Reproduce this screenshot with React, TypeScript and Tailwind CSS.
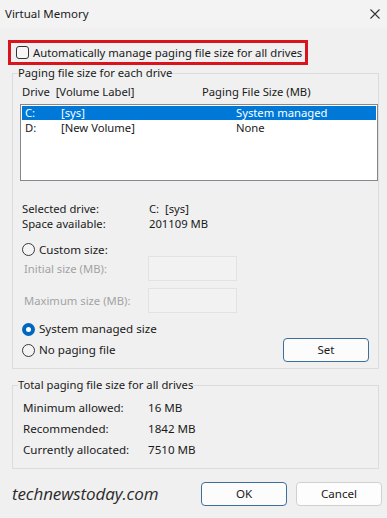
import React from "react";

function Radio({ checked }: { checked?: boolean }) {
  return checked ? (
    <span className="w-[13px] h-[13px] rounded-full bg-[#0067c0] flex items-center justify-center shrink-0">
      <span className="w-[5px] h-[5px] rounded-full bg-white" />
    </span>
  ) : (
    <span className="w-[13px] h-[13px] rounded-full border border-[#3a3a3a] bg-[#f4f4f4] shrink-0" />
  );
}

export default function App() {
  return (
    <div className="w-[387px] h-[518px] overflow-hidden bg-[#f0f0f0] text-[11.25px] leading-[16px] text-[#1a1a1a] font-['Noto_Sans',sans-serif] flex flex-col">
      {/* Title bar */}
      <div className="h-[28px] bg-[#f3f3f3] flex items-center justify-between pl-[5px] pr-[6px] shrink-0">
        <span className="text-[11.5px]">Virtual Memory</span>
        <svg width="10" height="10" viewBox="0 0 10 10" className="mr-[1px]">
          <path d="M0.5 0.5 L9.5 9.5 M9.5 0.5 L0.5 9.5" stroke="#333" strokeWidth="1.1" />
        </svg>
      </div>

      {/* Auto manage checkbox */}
      <div className="mt-[12px] ml-[8px] w-[300px] h-[25px] border-[3px] border-[#d9141c] flex items-center pl-[5px] shrink-0">
        <span className="w-[13px] h-[13px] rounded-[3px] border border-[#333] bg-[#f6f6f6] shrink-0" />
        <span className="ml-[4px] whitespace-nowrap text-[11.3px]">Automatically manage paging file size for all drives</span>
      </div>

      {/* Group 1 */}
      <fieldset className="ml-[12px] w-[367px] border border-[#dcdcdc] pb-[6px] shrink-0">
        <legend className="ml-[5px] leading-[16px]">Paging file size for each drive</legend>
        <div className="mt-[3px] h-[16px] flex pl-[9px]">
          <span className="w-[180px] whitespace-nowrap">Drive&nbsp; [Volume Label]</span>
          <span className="whitespace-nowrap">Paging File Size (MB)</span>
        </div>
        <div className="mt-[4px] ml-[7px] w-[358px] h-[77px] border border-[#828790] bg-white p-[1px]">
          <div className="h-[14px] bg-[#0078d7] text-white flex items-center pl-[3px] leading-[14px]">
            <span className="w-[36px]">C:</span>
            <span className="w-[175px]">[sys]</span>
            <span>System managed</span>
          </div>
          <div className="h-[15px] flex items-center pl-[3px] leading-[15px]">
            <span className="w-[36px]">D:</span>
            <span className="w-[175px]">[New Volume]</span>
            <span>None</span>
          </div>
        </div>

        <div className="mt-[20px] pl-[9px]">
          <div className="h-[15px] flex leading-[15px]">
            <span className="w-[127px]">Selected drive:</span>
            <span>C:&nbsp; [sys]</span>
          </div>
          <div className="h-[15px] flex leading-[15px]">
            <span className="w-[127px]">Space available:</span>
            <span>201109 MB</span>
          </div>
        </div>

        <div className="mt-[12px] pl-[9px] h-[13px] flex items-center">
          <Radio />
          <span className="ml-[4px] text-[11.6px] leading-[13px]">Custom size:</span>
        </div>

        <div className="pl-[11px] flex items-center h-[25px] text-[#a3a3a3]">
          <span className="w-[124px]">Initial size (MB):</span>
          <span className="w-[89px] h-[25px] border border-[#e2e2e2] bg-[#f2f2f2]" />
        </div>
        <div className="mt-[7px] pl-[11px] flex items-center h-[25px] text-[#a3a3a3]">
          <span className="w-[124px]">Maximum size (MB):</span>
          <span className="w-[89px] h-[25px] border border-[#e2e2e2] bg-[#f2f2f2]" />
        </div>

        <div className="mt-[8px] pl-[9px] h-[16px] flex items-center">
          <Radio checked />
          <span className="ml-[4px] text-[11.6px]">System managed size</span>
        </div>
        <div className="mt-[1px] pl-[9px] pr-[9px] h-[24px] flex items-center justify-between">
          <div className="flex items-center">
            <Radio />
            <span className="ml-[4px] text-[11.6px]">No paging file</span>
          </div>
          <button className="w-[86px] h-[24px] rounded-[4px] border border-[#3d6e9c] bg-[#fcfcfc] text-[11.5px]">
            Set
          </button>
        </div>
      </fieldset>

      {/* Group 2 */}
      <fieldset className="mt-[8px] ml-[12px] w-[367px] border border-[#dcdcdc] pb-[8px] shrink-0">
        <legend className="ml-[5px] leading-[16px]">Total paging file size for all drives</legend>
        <div className="mt-[4px] pl-[10px] text-[11.6px]">
          <div className="h-[21px] flex items-center">
            <span className="w-[125px]">Minimum allowed:</span>
            <span>16 MB</span>
          </div>
          <div className="h-[21px] flex items-center">
            <span className="w-[125px]">Recommended:</span>
            <span>1842 MB</span>
          </div>
          <div className="h-[21px] flex items-center">
            <span className="w-[125px]">Currently allocated:</span>
            <span>7510 MB</span>
          </div>
        </div>
      </fieldset>

      {/* Bottom bar */}
      <div className="mt-[13px] h-[24px] flex items-center shrink-0">
        <span className="ml-[12px] w-[189px] text-[17px] italic text-[#2b2b2b] font-['Open_Sans',sans-serif] leading-[24px] tracking-[-0.1px]">
          technewstoday.com
        </span>
        <button className="w-[86px] h-[24px] rounded-[4px] border border-[#3d6e9c] bg-[#fcfcfc] text-[11.6px]">
          OK
        </button>
        <button className="ml-[9px] w-[86px] h-[24px] rounded-[4px] border border-[#d0d0d0] bg-[#fdfdfd] text-[11.6px]">
          Cancel
        </button>
      </div>
    </div>
  );
}
